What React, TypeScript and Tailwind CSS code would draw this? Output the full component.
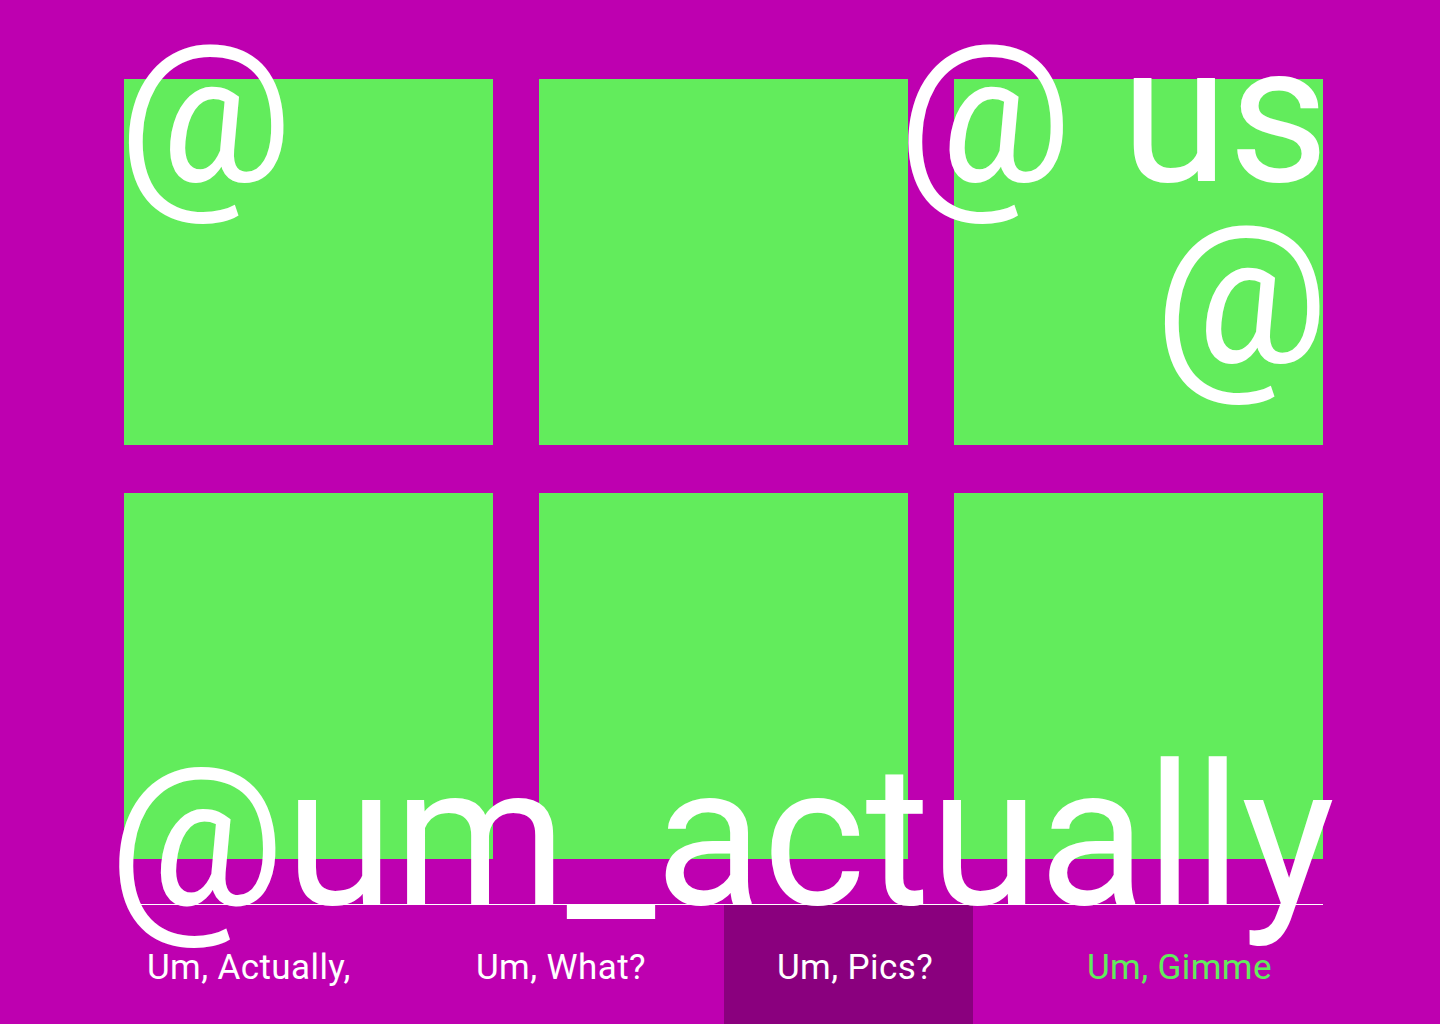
import React from "react";

const tiles = [0, 1, 2, 3, 4, 5];

export default function App() {
  return (
    <div className="relative w-full h-[1024px] overflow-hidden bg-[#be00b0] font-['Roboto','Liberation_Sans',sans-serif] text-white">
      {/* Photo grid */}
      <div className="grid grid-cols-[repeat(3,369px)] grid-rows-[repeat(2,366px)] gap-x-[46px] gap-y-[48px] pt-[79px] pl-[124px]">
        {tiles.map((t) => (
          <div key={t} className="bg-[#62ec5c]" />
        ))}
      </div>

      {/* Rule under the handle */}
      <div className="mt-[45px] ml-[139px] w-[1184px] h-px bg-white" />

      {/* Bottom nav */}
      <nav className="flex h-[119px] pl-[124px] text-[35px] leading-[40px] tracking-[0.4px]">
        <a className="w-[300px] pl-[23px] pt-[43px]">Um, Actually,</a>
        <a className="w-[300px] pl-[52px] pt-[43px]">Um, What?</a>
        <a className="w-[249px] pl-[53px] pt-[43px] bg-[#8a007e]">Um, Pics?</a>
        <a className="pl-[114px] pt-[43px] text-[#62ec5c]">Um, Gimme</a>
      </nav>

      {/* Big overlay type */}
      <div className="absolute left-[118px] top-[24px] text-[195px] leading-[181px]">@</div>
      <div className="absolute right-[111px] top-[24px] text-right text-[195px] leading-[181px]">
        @ us
        <br />@
      </div>
      <div className="absolute left-[122px] w-[1199px] top-[738px] flex justify-center text-[197px] leading-none whitespace-nowrap">
        @um_actually
      </div>
    </div>
  );
}
